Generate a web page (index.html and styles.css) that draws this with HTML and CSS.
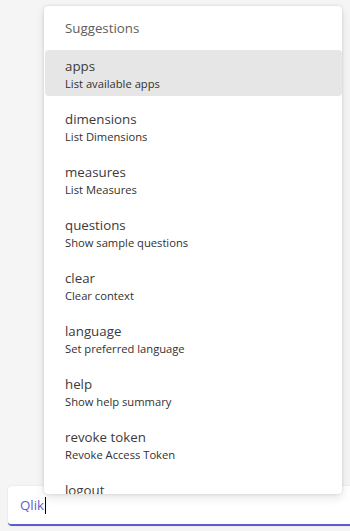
FILE: index.html
```html
<!DOCTYPE html>
<html>
<head>
  <title>Suggestions</title>
  <link rel="stylesheet" href="styles.css">
</head>
<body>
  <div class="page">
    <div class="compose">
      <div class="suggestions">
        <div class="suggestions-title">Suggestions</div>
        <div class="list">
          <div class="item active">
            <div class="item-name">apps</div>
            <div class="item-desc">List available apps</div>
          </div>
          <div class="item">
            <div class="item-name">dimensions</div>
            <div class="item-desc">List Dimensions</div>
          </div>
          <div class="item">
            <div class="item-name">measures</div>
            <div class="item-desc">List Measures</div>
          </div>
          <div class="item">
            <div class="item-name">questions</div>
            <div class="item-desc">Show sample questions</div>
          </div>
          <div class="item">
            <div class="item-name">clear</div>
            <div class="item-desc">Clear context</div>
          </div>
          <div class="item">
            <div class="item-name">language</div>
            <div class="item-desc">Set preferred language</div>
          </div>
          <div class="item">
            <div class="item-name">help</div>
            <div class="item-desc">Show help summary</div>
          </div>
          <div class="item">
            <div class="item-name">revoke token</div>
            <div class="item-desc">Revoke Access Token</div>
          </div>
          <div class="item">
            <div class="item-name">logout</div>
            <div class="item-desc">Log out</div>
          </div>
        </div>
      </div>
      <div class="input"><span class="mention">Qlik</span><span class="caret"></span></div>
    </div>
  </div>
</body>
</html>
```

FILE: styles.css
```css
/* compose box with suggestion popup */
body {
  margin: 0;
  background-color: #f5f5f5;
  font-family: "Open Sans", sans-serif;
  overflow: hidden;
}

.page {
  height: 531px;
  display: flex;
  flex-direction: column;
  justify-content: flex-end;
}

.compose {
  position: relative;
  margin: 0 -8px 5px 8px;
}

.input {
  height: 38px;
  background-color: #fff;
  border-bottom: 2px solid #5b5fc7;
  border-radius: 4px;
  box-shadow: 0 0 2px rgba(0, 0, 0, 0.12);
  display: flex;
  align-items: center;
  padding-left: 12px;
  font-size: 13.3px;
}

.mention {
  color: #5b5fc7;
}

.caret {
  width: 1px;
  height: 17px;
  background-color: #000;
  margin-left: 1px;
}

.suggestions {
  position: absolute;
  left: 36px;
  bottom: 32px;
  width: 298px;
  height: 488px;
  background-color: #fff;
  border-radius: 4px;
  box-shadow: 0 0 3px rgba(0, 0, 0, 0.14), 0 4px 10px rgba(0, 0, 0, 0.1);
  overflow: hidden;
  z-index: 1;
}

.suggestions-title {
  height: 44px;
  line-height: 44px;
  padding-left: 21px;
  font-size: 13.3px;
  color: #605e5c;
}

.list {
  display: flex;
  flex-direction: column;
  gap: 7px;
}

.item {
  height: 46px;
  padding: 6px 20px 0 20px;
  box-sizing: border-box;
  border-radius: 4px;
  margin-left: 1px;
}

.item.active {
  background-color: #e6e6e6;
}

.item-name {
  font-size: 13.3px;
  line-height: 20px;
  color: #3b3a39;
}

.item-desc {
  font-size: 11.2px;
  line-height: 16px;
  color: #323130;
}
```
